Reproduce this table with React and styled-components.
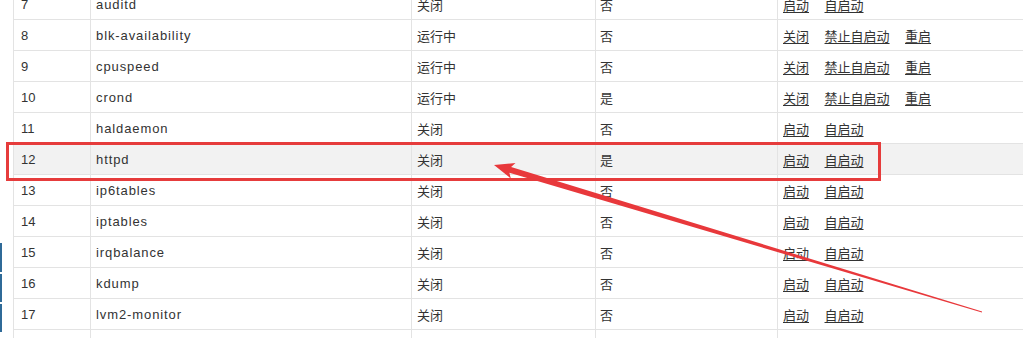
import React from "react";
import styled, { createGlobalStyle } from "styled-components";

const Global = createGlobalStyle`
  html, body { margin: 0; padding: 0; background: #fff; overflow: hidden; }
  body { width: 1023px; height: 338px; }
`;

const Page = styled.div`
  position: relative;
  display: flex;
  width: 1023px;
  height: 338px;
  overflow: hidden;
  font-family: "Liberation Sans", "Noto Sans CJK SC", sans-serif;
  font-size: 13px;
  color: #333;
`;

const SideEdge = styled.div`
  display: flex;
  flex-direction: column;
  gap: 2px;
  width: 2px;
  padding-top: 243px;
  flex: none;
`;

const EdgeSeg = styled.div`
  height: ${(p) => p.$h}px;
  background: #2f6a98;
`;

const TableWrap = styled.div`
  margin-left: 11px;
  margin-top: -12px;
  flex: none;
`;

const Table = styled.table`
  border-collapse: collapse;
  table-layout: fixed;
  width: 1060px;
`;

const Row = styled.tr`
  background: ${(p) => (p.$hl ? "#f2f2f2" : "#fff")};
`;

const Cell = styled.td`
  height: 30px;
  padding: 0 0 0 ${(p) => p.$pad || 6}px;
  border: 1px solid #e3e3e3;
  vertical-align: middle;
  white-space: nowrap;
  letter-spacing: ${(p) => (p.$latin ? "0.9px" : "0")};
`;

const Links = styled.div`
  display: flex;
  gap: 15.5px;
`;

const Action = styled.a`
  color: #333;
  text-decoration: underline;
  text-underline-offset: 2px;
  cursor: pointer;
`;

const HighlightBox = styled.div`
  position: absolute;
  left: 6px;
  top: 142px;
  width: 869px;
  height: 33px;
  border: 3px solid #e63c3c;
  pointer-events: none;
`;

const ArrowSvg = styled.svg`
  position: absolute;
  left: 0;
  top: 0;
  pointer-events: none;
`;

const RUN = ["关闭", "禁止自启动", "重启"];
const OFF = ["启动", "自启动"];

const rows = [
  [7, "auditd", "关闭", "否", OFF],
  [8, "blk-availability", "运行中", "否", RUN],
  [9, "cpuspeed", "运行中", "否", RUN],
  [10, "crond", "运行中", "是", RUN],
  [11, "haldaemon", "关闭", "否", OFF],
  [12, "httpd", "关闭", "是", OFF, true],
  [13, "ip6tables", "关闭", "否", OFF],
  [14, "iptables", "关闭", "否", OFF],
  [15, "irqbalance", "关闭", "否", OFF],
  [16, "kdump", "关闭", "否", OFF],
  [17, "lvm2-monitor", "关闭", "否", OFF],
];

export default function App() {
  return (
    <>
      <Global />
      <Page>
        <SideEdge>
          <EdgeSeg $h={29} />
          <EdgeSeg $h={28} />
          <EdgeSeg $h={28} />
        </SideEdge>
        <TableWrap>
          <Table>
            <colgroup>
              <col style={{ width: 77 }} />
              <col style={{ width: 321 }} />
              <col style={{ width: 184 }} />
              <col style={{ width: 182 }} />
              <col />
            </colgroup>
            <tbody>
              {rows.map(([n, name, state, auto, acts, hl]) => (
                <Row key={n} $hl={hl}>
                  <Cell $pad={7}>{n}</Cell>
                  <Cell $pad={5} $latin>{name}</Cell>
                  <Cell $pad={5}>{state}</Cell>
                  <Cell $pad={4}>{auto}</Cell>
                  <Cell $pad={5}>
                    <Links>
                      {acts.map((a) => (
                        <Action key={a}>{a}</Action>
                      ))}
                    </Links>
                  </Cell>
                </Row>
              ))}
              <Row>
                <Cell />
                <Cell />
                <Cell />
                <Cell />
                <Cell />
              </Row>
            </tbody>
          </Table>
        </TableWrap>
        <HighlightBox />
        <ArrowSvg width="1023" height="338" viewBox="0 0 1023 338">
          <polygon
            points="494,165 515.5,163.1 511.1,167 982.1,311.5 981.9,312.5 509.4,172.8 510.8,178.4"
            fill="#e8383b"
          />
        </ArrowSvg>
      </Page>
    </>
  );
}
